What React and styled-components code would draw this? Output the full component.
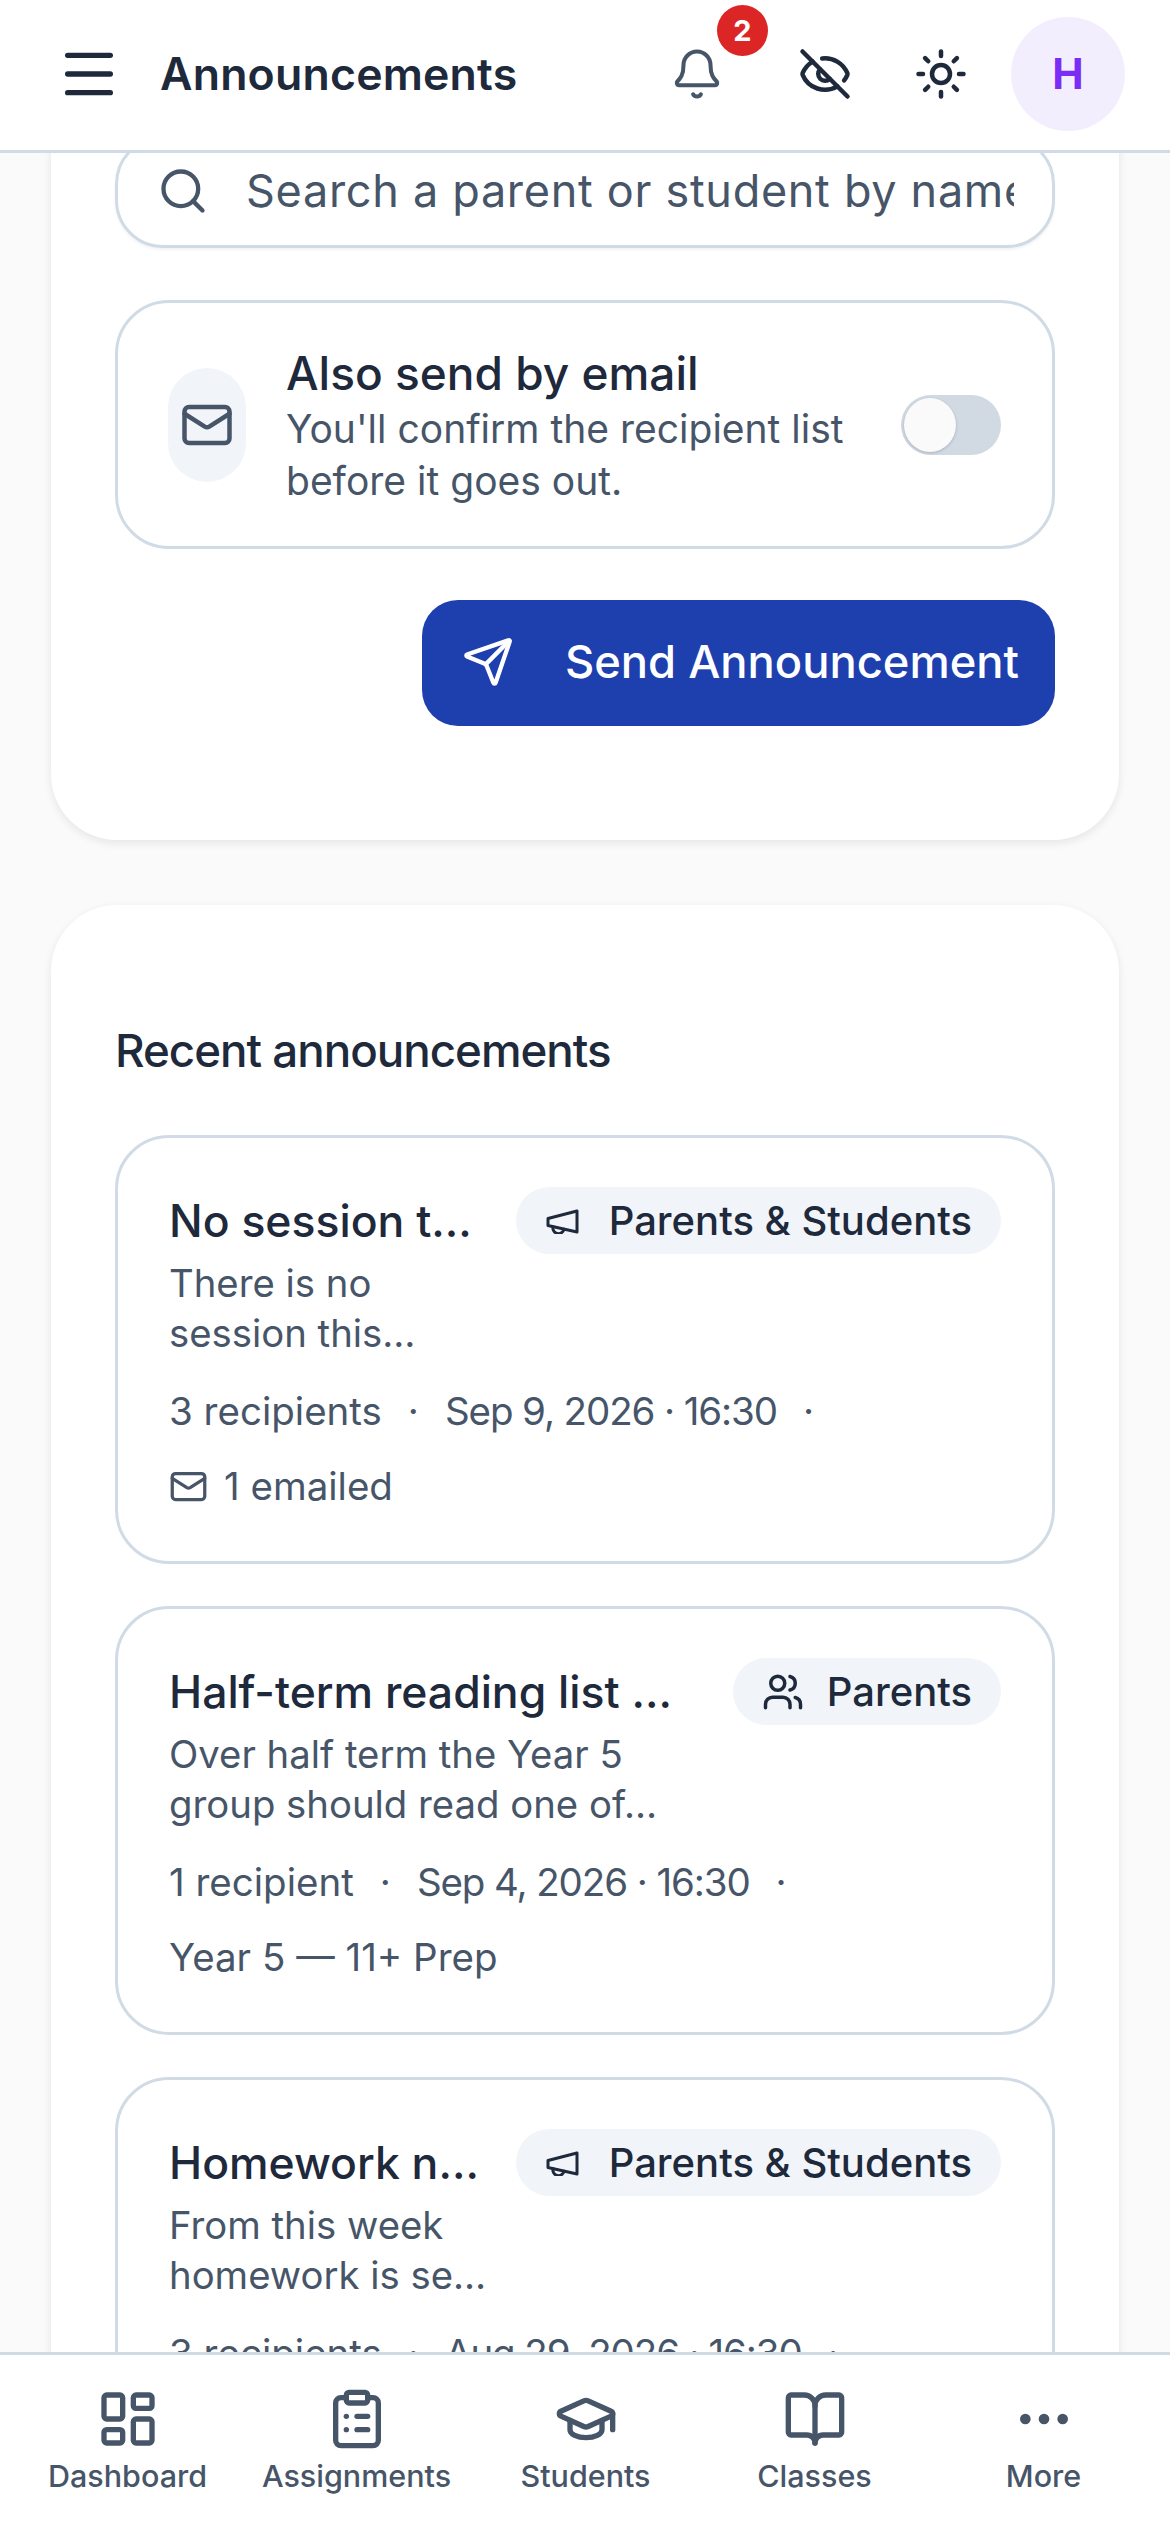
import React from "react";
import styled, { createGlobalStyle } from "styled-components";
import { Menu, Bell, EyeOff, Sun, Search, Mail, Send, Users, LayoutDashboard, ClipboardList, GraduationCap, BookOpen, Ellipsis } from "lucide-react";

const Global = createGlobalStyle`
  html, body { margin: 0; padding: 0; background: #fafafa; }
  * { box-sizing: border-box; }
  body { font-family: "Inter", "Noto Sans", sans-serif; color: #1e293b; }
`;
const Shell = styled.div`
  width: 1170px; height: 2532px; display: flex; flex-direction: column; overflow: hidden; background: #fafafa;
`;
const Header = styled.header`
  flex: none; height: 153px; display: flex; align-items: center; background: #fff;
  border-bottom: 3px solid #d1dbe6; padding: 0 45px 3px 57px;
`;
const MenuSlot = styled.span`
  display: inline-flex; color: #1e293b;
`;
const Title = styled.h1`
  margin: 0 0 0 39px; font-size: 44.6px; font-weight: 600; color: #1e293b; letter-spacing: 0.2px; flex: 1; white-space: nowrap;
`;
const HeaderActions = styled.div`
  display: flex; align-items: center; gap: 62px;
`;
const BellSlot = styled.span`
  display: inline-flex; position: relative; color: #475569; margin-right: 12px;
`;
const DarkIcon = styled.span`
  display: inline-flex; color: #1e293b;
`;
const Badge = styled.span`
  position: absolute; top: -42px; left: 47px; width: 51px; height: 51px; border-radius: 50%;
  background: #dc2626; color: #fff; font-size: 29px; font-weight: 700; display: flex; align-items: center; justify-content: center;
`;
const Avatar = styled.div`
  width: 114px; height: 114px; border-radius: 50%; background: #f3eefe; color: #7c2df5;
  font-size: 42px; font-weight: 700; display: flex; align-items: center; justify-content: center; margin-left: -19px;
`;
const Main = styled.main`
  flex: 1; min-height: 0; overflow: hidden;
`;
const Scroll = styled.div`
  margin-top: -100px; padding: 0 51px; display: flex; flex-direction: column; gap: 65px;
`;
const Card = styled.section`
  background: #fff; border-radius: 66px; padding: ${p => p.$top}px 64px ${p => p.$bottom}px;
  box-shadow: 0 3px 9px rgba(15, 23, 42, 0.09); display: flex; flex-direction: column;
`;
const SearchField = styled.div`
  height: 112px; border: 3px solid #d1dbe6; border-radius: 48px; display: flex; align-items: center; padding: 0 38px 3px 39px;
  box-shadow: 0 2px 3px rgba(15,23,42,.05); gap: 37px; color: #475569; overflow: hidden;
`;
const SearchText = styled.span`
  font-size: 45px; white-space: nowrap; overflow: hidden; color: #475569; flex: 1; min-width: 0; letter-spacing: 0.7px;
`;
const EmailCard = styled.div`
  margin-top: 52px; height: 249px; border: 3px solid #d1dbe6; border-radius: 54px; display: flex; align-items: center;
  padding: 0 51px 0 50px;
`;
const EmailIcon = styled.div`
  flex: none; width: 78px; height: 114px; border-radius: 39px; background: #f1f5f9; color: #475569; display: flex; align-items: center; justify-content: center;
`;
const EmailText = styled.div`
  flex: 1; margin-left: 40px; display: flex; flex-direction: column;
`;
const EmailTitle = styled.div`
  font-size: 46px; font-weight: 500; line-height: 60px; color: #1e293b;
`;
const EmailSub = styled.div`
  font-size: 39px; line-height: 52px; color: #475569; width: 580px;
`;
const Toggle = styled.div`
  flex: none; width: 100px; height: 60px; border-radius: 30px; background: #d1d9e3; padding: 3px; display: flex; align-items: center;
`;
const Thumb = styled.div`
  width: 52px; height: 54px; border-radius: 50%; background: #fafafa; box-shadow: 0 1px 3px rgba(15,23,42,.2);
`;
const SendButton = styled.button`
  margin-top: 51px; align-self: flex-end; width: 633px; height: 126px; border: 0; border-radius: 36px; background: #1e40af; color: #fff;
  font-family: inherit; font-size: 45.3px; font-weight: 500; display: flex; align-items: center; padding: 0 0 3px 40px; gap: 51px; white-space: nowrap;
`;
const SectionTitle = styled.h2`
  margin: 0; font-size: 45.7px; line-height: 60px; font-weight: 500; color: #1e293b; letter-spacing: -1px;
`;
const ItemList = styled.div`
  margin-top: 54px; display: flex; flex-direction: column; gap: 42px;
`;
const Item = styled.article`
  height: 429px; border: 3px solid #d1dbe6; border-radius: 54px; padding: 49px 51px 0 51px;
`;
const ItemHead = styled.div`
  display: flex; align-items: center; justify-content: space-between; height: 67px;
`;
const ItemTitle = styled.div`
  font-size: 44.5px; font-weight: 500; color: #1e293b; white-space: nowrap;
`;
const Audience = styled.div`
  height: 67px; border-radius: 34px; background: #f1f5f9; padding: 0 29px; display: flex; align-items: center; gap: 23px;
  font-size: 40px; font-weight: 500; color: #1e293b; white-space: nowrap;
`;
const Desc = styled.div`
  margin-top: 4px; font-size: 38.3px; line-height: 50px; color: #475569; white-space: pre-line;
`;
const Meta = styled.div`
  margin-top: 28px; display: flex; flex-wrap: wrap; column-gap: 26px; row-gap: 25px; font-size: 38.5px; line-height: 50px; color: #475569;
`;
const MetaItem = styled.span`
  display: inline-flex; align-items: center; gap: 16px; white-space: nowrap;
`;
const MetaDate = styled(MetaItem)`
  letter-spacing: -1.1px;
`;
const BottomNav = styled.nav`
  flex: none; height: 180px; background: #fff; border-top: 3px solid #d1dbe6; display: grid; grid-template-columns: repeat(5, 229px);
  padding: 0 13px;
`;
const NavItem = styled.div`
  display: flex; flex-direction: column; align-items: center; padding-top: 32px; color: #475569; font-size: 30.5px; font-weight: 500; gap: 6px; white-space: nowrap;
`;

const Megaphone = () => (
  <svg width="41" height="26" viewBox="0 0 41 26" fill="none" stroke="currentColor" strokeWidth="3" strokeLinejoin="round" strokeLinecap="round">
    <path d="M3 10.5 32 3v21L3 17.5Z" />
    <path d="M8 18.8a5.5 5.5 0 0 0 11 2.4" />
  </svg>
);
const UsersIcon = () => <Users size={42} strokeWidth={2} />;

const items = [
  { title: "No session t…", aud: "Parents & Students", icon: Megaphone, desc: "There is no\nsession this…", n: "3 recipients", date: "Sep 9, 2026 · 16:30", extra: <MetaItem><Mail size={39} strokeWidth={2} />1 emailed</MetaItem> },
  { title: "Half-term reading list …", aud: "Parents", icon: UsersIcon, desc: "Over half term the Year 5\ngroup should read one of…", n: "1 recipient", date: "Sep 4, 2026 · 16:30", extra: <MetaItem>Year 5 — 11+ Prep</MetaItem> },
  { title: "Homework n…", aud: "Parents & Students", icon: Megaphone, desc: "From this week\nhomework is se…", n: "3 recipients", date: "Aug 29, 2026 · 16:30", extra: null },
];
const nav = [
  ["Dashboard", LayoutDashboard], ["Assignments", ClipboardList], ["Students", GraduationCap], ["Classes", BookOpen], ["More", Ellipsis],
];

export default function App() {
  return (
    <Shell>
      <Global />
      <Header>
        <MenuSlot><Menu size={64} strokeWidth={2} /></MenuSlot>
        <Title>Announcements</Title>
        <HeaderActions>
          <BellSlot>
            <Bell size={54} strokeWidth={1.8} />
            <Badge>2</Badge>
          </BellSlot>
          <DarkIcon><EyeOff size={54} strokeWidth={2} /></DarkIcon>
          <DarkIcon><Sun size={54} strokeWidth={2} /></DarkIcon>
          <Avatar>H</Avatar>
        </HeaderActions>
      </Header>
      <Main>
        <Scroll>
          <Card $top={83} $bottom={114}>
            <SearchField>
              <Search size={52} strokeWidth={2} />
              <SearchText>Search a parent or student by name</SearchText>
            </SearchField>
            <EmailCard>
              <EmailIcon><Mail size={54} strokeWidth={2} /></EmailIcon>
              <EmailText>
                <EmailTitle>Also send by email</EmailTitle>
                <EmailSub>You'll confirm the recipient list before it goes out.</EmailSub>
              </EmailText>
              <Toggle><Thumb /></Toggle>
            </EmailCard>
            <SendButton><Send size={52} strokeWidth={2} />Send Announcement</SendButton>
          </Card>
          <Card $top={116} $bottom={60}>
            <SectionTitle>Recent announcements</SectionTitle>
            <ItemList>
              {items.map(it => {
                const AudIcon = it.icon;
                return (
                  <Item key={it.title}>
                    <ItemHead>
                      <ItemTitle>{it.title}</ItemTitle>
                      <Audience><AudIcon />{it.aud}</Audience>
                    </ItemHead>
                    <Desc>{it.desc}</Desc>
                    <Meta>
                      <MetaItem>{it.n}</MetaItem>
                      <MetaItem>·</MetaItem>
                      <MetaDate>{it.date}</MetaDate>
                      <MetaItem>·</MetaItem>
                      {it.extra}
                    </Meta>
                  </Item>
                );
              })}
            </ItemList>
          </Card>
        </Scroll>
      </Main>
      <BottomNav>
        {nav.map(([label, C]) => (
          <NavItem key={label}><C size={64} strokeWidth={2} />{label}</NavItem>
        ))}
      </BottomNav>
    </Shell>
  );
}
